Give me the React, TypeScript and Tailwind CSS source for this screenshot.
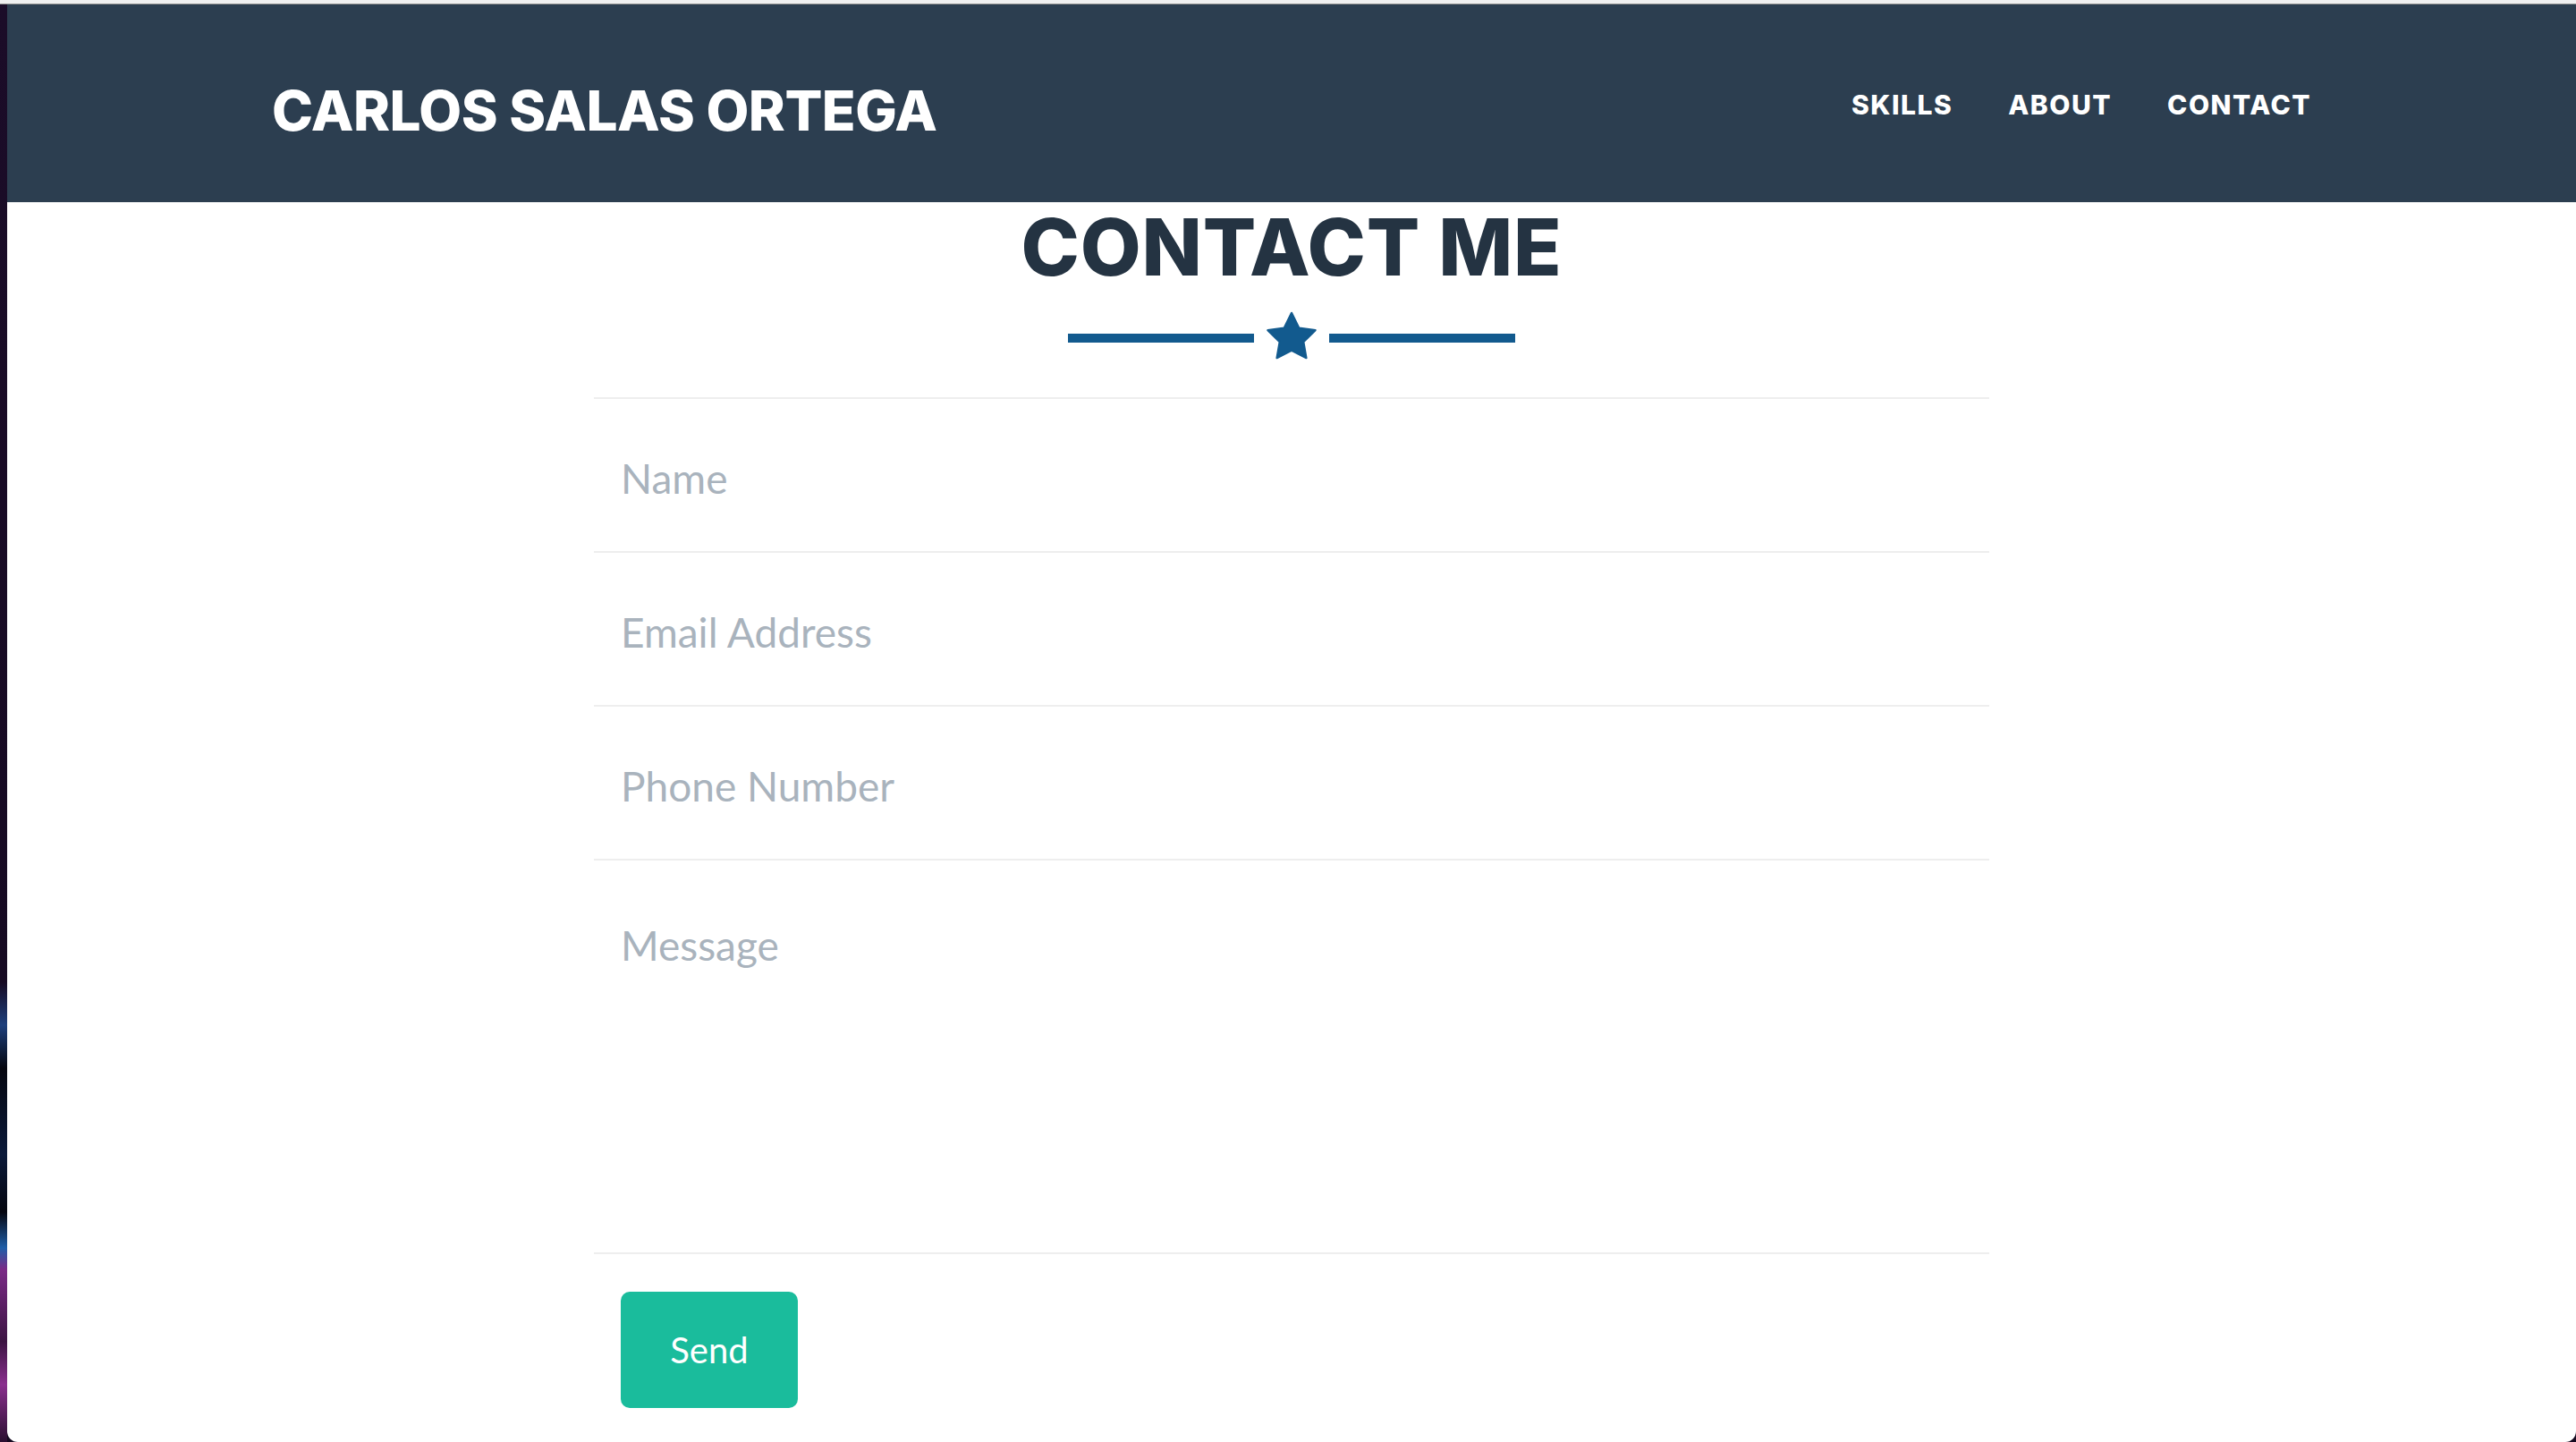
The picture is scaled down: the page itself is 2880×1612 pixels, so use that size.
import { useState } from 'react'

const fields = [
  { name: 'name', placeholder: 'Name', type: 'text' },
  { name: 'email', placeholder: 'Email Address', type: 'email' },
  { name: 'phone', placeholder: 'Phone Number', type: 'tel' },
]

const navLinks = ['SKILLS', 'ABOUT', 'CONTACT']

function Star() {
  return (
    <svg width="56" height="54" viewBox="0 0 100 96" className="mb-[6px]">
      <path
        d="M50 3 L64.7 32.8 L97.5 37.5 L73.8 60.7 L79.4 93 L50 78 L20.6 93 L26.2 60.7 L2.5 37.5 L35.3 32.8 Z"
        fill="#125a8e"
        stroke="#125a8e"
        strokeWidth="4"
        strokeLinejoin="round"
      />
    </svg>
  )
}

export default function App() {
  const [values, setValues] = useState<Record<string, string>>({})

  return (
    <div className="h-[1612px] overflow-hidden flex flex-col bg-[#150a20]">
      {/* browser chrome edge */}
      <div className="h-[5px] bg-[#f0f0f0] border-b border-[#8e8e8e] shrink-0" />

      <div className="flex flex-1 min-h-0">
        {/* wallpaper peeking at the left */}
        <div className="w-[8px] shrink-0 bg-[linear-gradient(to_bottom,#1b0c28_0%,#160a22_68%,#1d3f7c_71%,#05060f_74%,#0b1a3a_80%,#05060f_84%,#1f5ea8_86.5%,#7a2a86_88%,#3c1442_93%,#8a2f8e_96%,#2a0f30_100%)]" />

        <div className="flex-1 bg-white rounded-bl-[12px] rounded-br-[12px] flex flex-col">
          <header className="h-[221px] bg-[#2c3e50] shrink-0">
            <div className="w-[2340px] mx-auto px-[30px] flex justify-between items-start">
              <span className="mt-[88px] text-white text-[62px] leading-none font-extrabold font-['Inter',sans-serif] tracking-[-0.5px]">
                CARLOS SALAS ORTEGA
              </span>
              <nav className="mt-[97px] flex gap-[62px]">
                {navLinks.map(link => (
                  <a
                    key={link}
                    href={`#${link.toLowerCase()}`}
                    className="text-white text-[30px] leading-none font-extrabold tracking-[1.5px] font-['Inter',sans-serif]"
                  >
                    {link}
                  </a>
                ))}
              </nav>
            </div>
          </header>

          <section className="flex flex-col items-center">
            <h2 className="mt-[6px] text-[88px] leading-none font-extrabold tracking-[0.8px] text-[#243342] font-['Inter',sans-serif]">
              CONTACT ME
            </h2>

            {/* star divider */}
            <div className="mt-[28px] flex items-center gap-[14px]">
              <div className="w-[208px] h-[10px] bg-[#125a8e]" />
              <Star />
              <div className="w-[208px] h-[10px] bg-[#125a8e]" />
            </div>

            <form
              className="mt-[36px] w-[1560px] font-['Lato',sans-serif]"
              onSubmit={e => e.preventDefault()}
            >
              <div className="border-t-2 border-[#eeeeee]">
                {fields.map(f => (
                  <div key={f.name} className="h-[172px] pt-[61px] border-b-2 border-[#eeeeee] pl-[30px]">
                    <input
                      type={f.type}
                      placeholder={f.placeholder}
                      value={values[f.name] || ''}
                      onChange={e => setValues({ ...values, [f.name]: e.target.value })}
                      className="block w-full h-[55px] bg-transparent outline-none text-[46px] leading-[1.2] text-[#2c3e50] placeholder:text-[#a9b3bd]"
                    />
                  </div>
                ))}
                <div className="h-[440px] pt-[67px] border-b-2 border-[#eeeeee] pl-[30px]">
                  <textarea
                    placeholder="Message"
                    value={values.message || ''}
                    onChange={e => setValues({ ...values, message: e.target.value })}
                    className="block w-full h-[320px] resize-none bg-transparent outline-none text-[46px] leading-[1.2] text-[#2c3e50] placeholder:text-[#a9b3bd]"
                  />
                </div>
              </div>

              <div className="pt-[42px] pl-[30px]">
                <button
                  type="submit"
                  className="w-[198px] h-[130px] rounded-[10px] bg-[#1abc9c] text-white text-[40px] leading-none"
                >
                  Send
                </button>
              </div>
            </form>
          </section>
        </div>
      </div>
    </div>
  )
}
